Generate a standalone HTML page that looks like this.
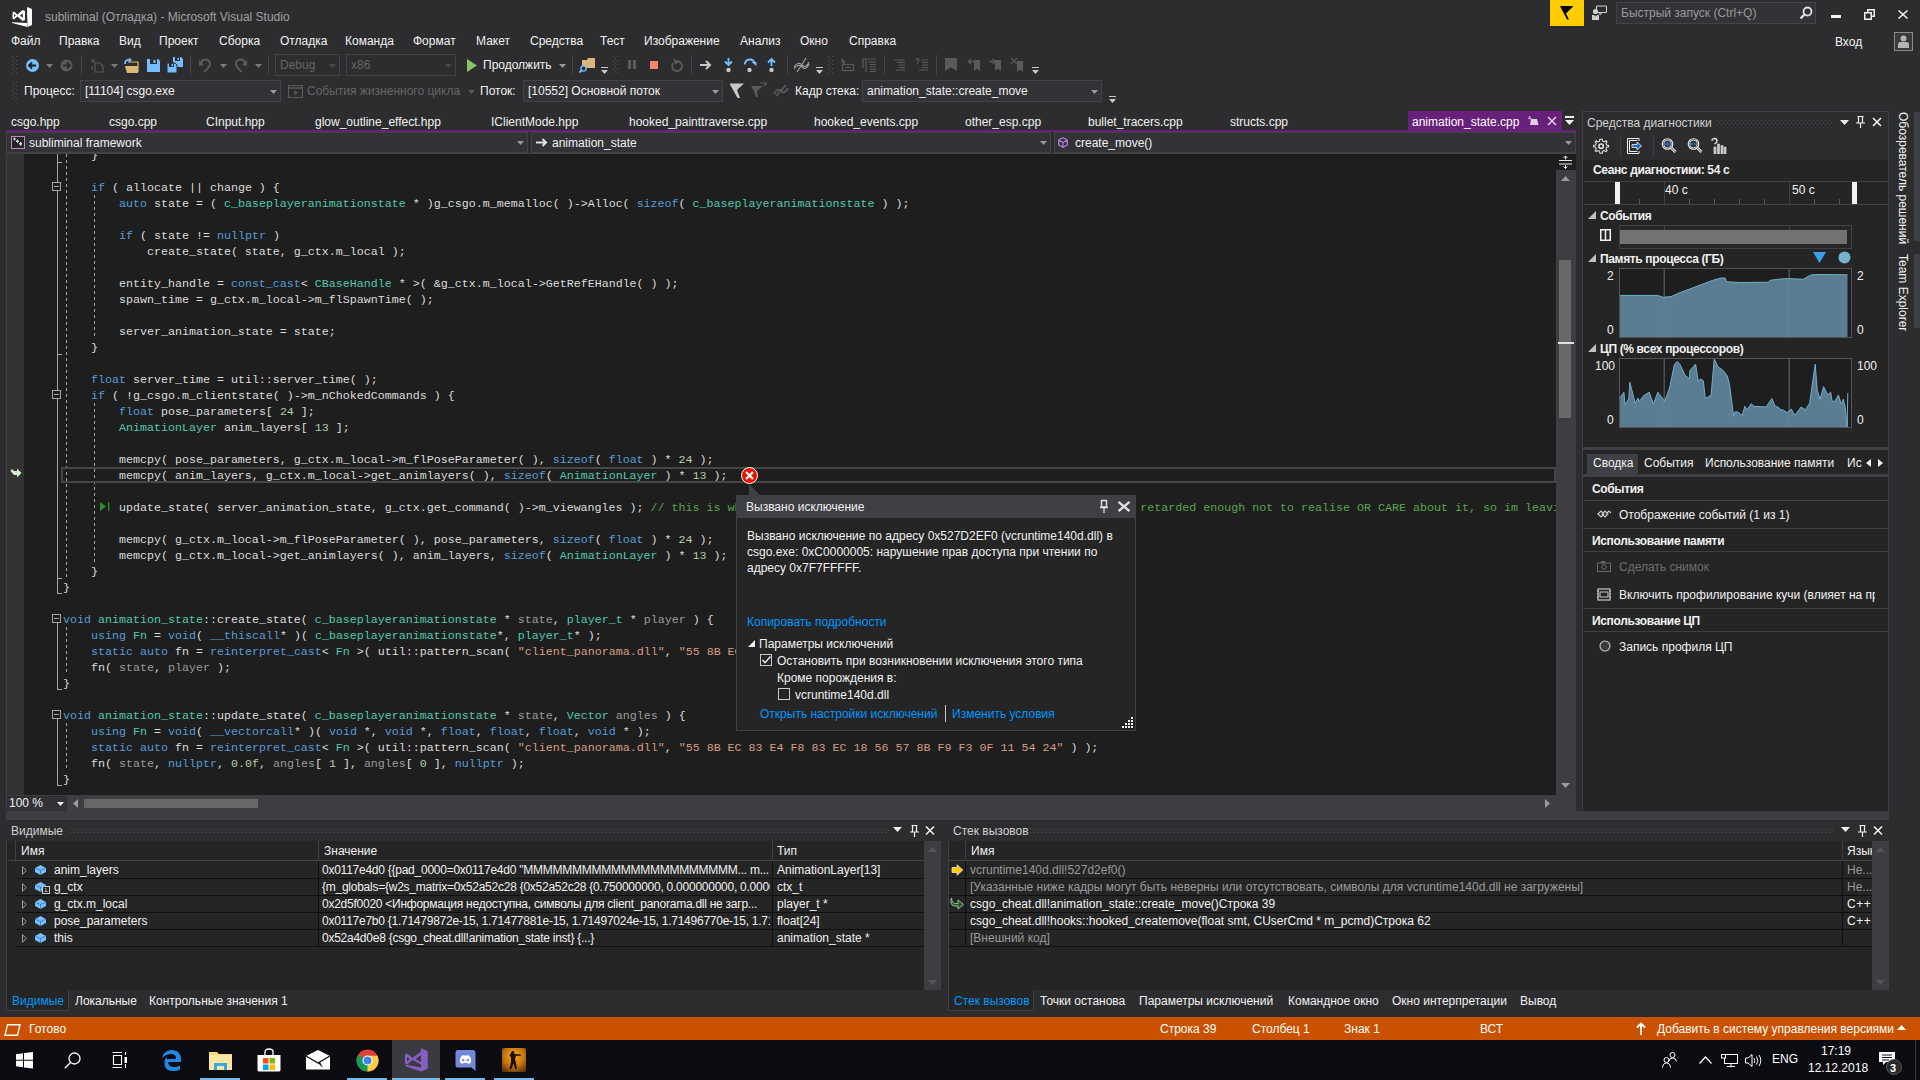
<!DOCTYPE html><html><head><meta charset="utf-8"><style>
*{margin:0;padding:0;box-sizing:border-box}
html,body{width:1920px;height:1080px;overflow:hidden;background:#2D2D30;font-family:"Liberation Sans",sans-serif}
.a{position:absolute}
.t{position:absolute;white-space:pre;line-height:16px;height:16px;font-family:"Liberation Sans",sans-serif}
.c{position:absolute;white-space:pre;line-height:16px;height:16px;font-family:"Liberation Mono",monospace;font-size:11.667px;color:#DCDCDC}
svg{position:absolute;overflow:visible}
</style></head><body><svg style="left:12px;top:6px" width="21" height="22" viewBox="0 0 21 22"><path d="M15 1 L20 3 V19 L15.5 21 Z" fill="#FFFFFF"/><path d="M0 16.2 L15 17 L15.5 21 L0 16.9 Z" fill="#FFFFFF"/><path d="M0.5 6.5 L2 5.5 L5.5 8.5 L10.5 4 L13 5 V14 L10.5 15 L5.5 10.5 L2 13.5 L0.5 12.5 Z M2 8 V11 L3.8 9.5 Z M8 9.5 L10.8 7.2 V11.8 Z" fill="#FFFFFF" fill-rule="evenodd"/></svg>
<div class="t" style="left:45px;top:9px;color:#A0A0A0;font-size:12px;">subliminal (Отладка) - Microsoft Visual Studio</div>
<div class="a" style="left:1550px;top:0px;width:34px;height:26px;background:#FFCC00;"></div>
<svg style="left:1559px;top:5px" width="16" height="16" viewBox="0 0 16 16"><path d="M1 1 H14.5 L7 8.5 L10 14.5 H8 Z" fill="#000000"/></svg>
<svg style="left:1591px;top:5px" width="17" height="16" viewBox="0 0 17 16"><rect x="5.5" y="1" width="10" height="6.5" rx="0.8" fill="none" stroke="#D0D0D0" stroke-width="1.1"/><path d="M8.5 7.5 L9 10 L11 7.5" fill="none" stroke="#D0D0D0" stroke-width="1"/><circle cx="4.5" cy="6.5" r="2.6" fill="#D0D0D0"/><path d="M1 10 H3 L4.5 11.5 L6 10 H8 V15 H1 Z" fill="#D0D0D0"/></svg>
<div class="a" style="left:1616px;top:2px;width:200px;height:22px;background:#333337;border:1px solid #434346;"></div>
<div class="t" style="left:1621px;top:5px;color:#999999;font-size:12px;">Быстрый запуск (Ctrl+Q)</div>
<svg style="left:1799px;top:6px" width="14" height="14" viewBox="0 0 14 14"><circle cx="8.5" cy="5.5" r="4" fill="none" stroke="#E0E0E0" stroke-width="1.8"/><path d="M6 8 L1.5 12.5" stroke="#E0E0E0" stroke-width="2.4"/></svg>
<div class="a" style="left:1831px;top:15px;width:10px;height:3px;background:#F1F1F1;"></div>
<svg style="left:1864px;top:9px" width="11" height="11" viewBox="0 0 11 11"><rect x="0.75" y="3.75" width="6.5" height="6.5" fill="none" stroke="#F1F1F1" stroke-width="1.5"/><path d="M3.75 3.5 V0.75 H10.25 V7.25 H7.5" fill="none" stroke="#F1F1F1" stroke-width="1.5"/></svg>
<svg style="left:1898px;top:10px" width="10" height="9" viewBox="0 0 10 9"><path d="M0.5 0.5 L9.5 8.5 M9.5 0.5 L0.5 8.5" stroke="#F1F1F1" stroke-width="1.6"/></svg>
<div class="t" style="left:1835px;top:34px;color:#F1F1F1;font-size:12px;">Вход</div>
<div class="a" style="left:1894px;top:32px;width:19px;height:19px;border:1px solid #8A8A8A;background:#3A3A3D;"></div>
<svg style="left:1896px;top:34px" width="15" height="15" viewBox="0 0 15 15"><circle cx="7.5" cy="4.5" r="3" fill="#B4B4B4"/><path d="M2 14 V10 Q2 8 4.5 8 H10.5 Q13 8 13 10 V14 Z" fill="#B4B4B4"/></svg>
<div class="t" style="left:11px;top:33px;color:#F1F1F1;font-size:12px;">Файл</div>
<div class="t" style="left:59px;top:33px;color:#F1F1F1;font-size:12px;">Правка</div>
<div class="t" style="left:119px;top:33px;color:#F1F1F1;font-size:12px;">Вид</div>
<div class="t" style="left:159px;top:33px;color:#F1F1F1;font-size:12px;">Проект</div>
<div class="t" style="left:219px;top:33px;color:#F1F1F1;font-size:12px;">Сборка</div>
<div class="t" style="left:280px;top:33px;color:#F1F1F1;font-size:12px;">Отладка</div>
<div class="t" style="left:345px;top:33px;color:#F1F1F1;font-size:12px;">Команда</div>
<div class="t" style="left:413px;top:33px;color:#F1F1F1;font-size:12px;">Формат</div>
<div class="t" style="left:476px;top:33px;color:#F1F1F1;font-size:12px;">Макет</div>
<div class="t" style="left:530px;top:33px;color:#F1F1F1;font-size:12px;">Средства</div>
<div class="t" style="left:600px;top:33px;color:#F1F1F1;font-size:12px;">Тест</div>
<div class="t" style="left:644px;top:33px;color:#F1F1F1;font-size:12px;">Изображение</div>
<div class="t" style="left:740px;top:33px;color:#F1F1F1;font-size:12px;">Анализ</div>
<div class="t" style="left:800px;top:33px;color:#F1F1F1;font-size:12px;">Окно</div>
<div class="t" style="left:849px;top:33px;color:#F1F1F1;font-size:12px;">Справка</div>
<svg style="left:12px;top:56px" width="5" height="18"><defs><pattern id="dp1" width="4" height="4" patternUnits="userSpaceOnUse"><rect x="0" y="0" width="1" height="1" fill="#505055"/><rect x="2" y="2" width="1" height="1" fill="#505055"/></pattern></defs><rect width="5" height="18" fill="url(#dp1)"/></svg>
<svg style="left:26px;top:59px" width="13" height="13" viewBox="0 0 13 13"><circle cx="6.5" cy="6.5" r="6.5" fill="#75BEFF"/><path d="M3 6.5 H10 M6 3.5 L3 6.5 L6 9.5" fill="none" stroke="#1E1E1E" stroke-width="1.8"/></svg>
<svg style="left:46px;top:64px" width="7" height="4" viewBox="0 0 7 4"><path d="M0 0 H7 L3.5 4 Z" fill="#7A7A7A"/></svg>
<svg style="left:60px;top:59px" width="13" height="13" viewBox="0 0 13 13"><circle cx="6.5" cy="6.5" r="6" fill="#5A5A5A"/><path d="M3 6.5 H10 M7 3.5 L10 6.5 L7 9.5" fill="none" stroke="#2D2D30" stroke-width="1.8"/></svg>
<div class="a" style="left:81px;top:55px;width:1px;height:20px;background:#46464A;"></div>
<svg style="left:90px;top:58px" width="14" height="15" viewBox="0 0 14 15"><path d="M3 1 L3 5 M1 3 H5 M1.5 1.5 L4.5 4.5 M4.5 1.5 L1.5 4.5" stroke="#5A5A5A" stroke-width="0.9"/><path d="M5 5 H10 L13 8 V14 H5 Z M2 8 V11 H3" fill="none" stroke="#5A5A5A" stroke-width="1.2"/></svg>
<svg style="left:111px;top:64px" width="7" height="4" viewBox="0 0 7 4"><path d="M0 0 H7 L3.5 4 Z" fill="#7A7A7A"/></svg>
<svg style="left:124px;top:57px" width="15" height="16" viewBox="0 0 15 16"><path d="M1 9 H14 V16 H3 Z" fill="#DCB67A"/><path d="M4 5 H14 V15" fill="none" stroke="#DCB67A" stroke-width="1.2"/><path d="M1 7 Q1 2 6 3" fill="none" stroke="#75BEFF" stroke-width="1.8"/><path d="M5 0.5 L8 3 L5 5.5 Z" fill="#75BEFF"/></svg>
<svg style="left:147px;top:59px" width="13" height="13" viewBox="0 0 13 13"><path d="M0 0 H11 L13 2 V13 H0 Z" fill="#75BEFF"/><rect x="3" y="0" width="7" height="5" fill="#2D2D30"/><rect x="6.5" y="1" width="2" height="3" fill="#75BEFF"/></svg>
<svg style="left:167px;top:57px" width="16" height="16" viewBox="0 0 16 16"><path d="M6 0 H14 L16 2 V10 H6 Z" fill="#75BEFF"/><rect x="8" y="0" width="5" height="4" fill="#2D2D30"/><rect x="10.5" y="0.8" width="1.5" height="2.4" fill="#75BEFF"/><path d="M0 6 H8 L10 8 V16 H0 Z" fill="#75BEFF" stroke="#2D2D30" stroke-width="1"/><rect x="2" y="6" width="5" height="4" fill="#2D2D30"/><rect x="4.5" y="6.8" width="1.5" height="2.4" fill="#75BEFF"/></svg>
<div class="a" style="left:190px;top:55px;width:1px;height:20px;background:#46464A;"></div>
<svg style="left:199px;top:58px" width="13" height="14" viewBox="0 0 13 14"><path d="M3 7 Q1 2 6 1.5 Q11 1.5 11 6 Q11 9 5 14" fill="none" stroke="#5A5A5A" stroke-width="2"/><path d="M0 2 L5 7 L0 8 Z" fill="#5A5A5A"/></svg>
<svg style="left:220px;top:64px" width="7" height="4" viewBox="0 0 7 4"><path d="M0 0 H7 L3.5 4 Z" fill="#7A7A7A"/></svg>
<svg style="left:234px;top:58px" width="13" height="14" viewBox="0 0 13 14"><path d="M10 7 Q12 2 7 1.5 Q2 1.5 2 6 Q2 9 8 14" fill="none" stroke="#5A5A5A" stroke-width="2"/><path d="M13 2 L8 7 L13 8 Z" fill="#5A5A5A"/></svg>
<svg style="left:255px;top:64px" width="7" height="4" viewBox="0 0 7 4"><path d="M0 0 H7 L3.5 4 Z" fill="#7A7A7A"/></svg>
<div class="a" style="left:268px;top:55px;width:1px;height:20px;background:#46464A;"></div>
<div class="a" style="left:275px;top:54px;width:65px;height:22px;background:#2D2D30;border:1px solid #434346;"></div>
<div class="t" style="left:280px;top:57px;color:#656565;font-size:12px;">Debug</div>
<svg style="left:329px;top:64px" width="7" height="4" viewBox="0 0 7 4"><path d="M0 0 H7 L3.5 4 Z" fill="#4A4A4A"/></svg>
<div class="a" style="left:346px;top:54px;width:110px;height:22px;background:#2D2D30;border:1px solid #434346;"></div>
<div class="t" style="left:351px;top:57px;color:#656565;font-size:12px;">x86</div>
<svg style="left:445px;top:64px" width="7" height="4" viewBox="0 0 7 4"><path d="M0 0 H7 L3.5 4 Z" fill="#4A4A4A"/></svg>
<svg style="left:467px;top:59px" width="10" height="13" viewBox="0 0 10 13"><path d="M0 0 L10 6.5 L0 13 Z" fill="#8CC265"/></svg>
<div class="t" style="left:483px;top:57px;color:#F1F1F1;font-size:12px;">Продолжить</div>
<svg style="left:559px;top:64px" width="7" height="4" viewBox="0 0 7 4"><path d="M0 0 H7 L3.5 4 Z" fill="#999999"/></svg>
<div class="a" style="left:572px;top:55px;width:1px;height:20px;background:#46464A;"></div>
<svg style="left:579px;top:57px" width="18" height="17" viewBox="0 0 18 17"><path d="M3 3 H8 L9 1 H16 V11 H3 Z" fill="#DCB67A"/><circle cx="4.5" cy="11.5" r="2.6" fill="#2D2D30" stroke="#75BEFF" stroke-width="1.4"/><path d="M2.8 13.2 L0.5 15.5" stroke="#75BEFF" stroke-width="1.8"/></svg>
<div class="a" style="left:601px;top:67px;width:7px;height:1px;background:#C8C8C8;"></div>
<svg style="left:601px;top:70px" width="7" height="4" viewBox="0 0 7 4"><path d="M0 0 H7 L3.5 4 Z" fill="#C8C8C8"/></svg>
<svg style="left:613px;top:56px" width="5" height="18"><defs><pattern id="dp2" width="4" height="4" patternUnits="userSpaceOnUse"><rect x="0" y="0" width="1" height="1" fill="#505055"/><rect x="2" y="2" width="1" height="1" fill="#505055"/></pattern></defs><rect width="5" height="18" fill="url(#dp2)"/></svg>
<div class="a" style="left:628px;top:60px;width:3px;height:9px;background:#5A5A5A;"></div>
<div class="a" style="left:633px;top:60px;width:3px;height:9px;background:#5A5A5A;"></div>
<div class="a" style="left:650px;top:61px;width:8px;height:8px;background:#F48771;"></div>
<svg style="left:670px;top:58px" width="13" height="14" viewBox="0 0 13 14"><path d="M3.5 4.5 A5 5 0 1 0 6.5 3" fill="none" stroke="#5A5A5A" stroke-width="1.8"/><path d="M4 0 V6 H9.5 Z" fill="#5A5A5A" transform="rotate(-20 5 3)"/></svg>
<div class="a" style="left:691px;top:55px;width:1px;height:20px;background:#46464A;"></div>
<svg style="left:700px;top:60px" width="12" height="10" viewBox="0 0 12 10"><path d="M0 5 H10 M6 1 L10 5 L6 9" fill="none" stroke="#C8C8C8" stroke-width="2"/></svg>
<svg style="left:724px;top:58px" width="9" height="15" viewBox="0 0 9 15"><path d="M4.5 0 V6 M1 3.5 L4.5 7 L8 3.5" fill="none" stroke="#75BEFF" stroke-width="1.8"/><circle cx="4.5" cy="12" r="2.2" fill="#C8C8C8"/></svg>
<svg style="left:743px;top:58px" width="14" height="15" viewBox="0 0 14 15"><path d="M1.5 6.5 Q2.5 1.5 7 1.5 Q10.5 1.5 11.5 5" fill="none" stroke="#75BEFF" stroke-width="1.8"/><path d="M8.5 4 H13.5 V8 Z" fill="#75BEFF"/><circle cx="6.5" cy="12" r="2.2" fill="#C8C8C8"/></svg>
<svg style="left:767px;top:58px" width="9" height="15" viewBox="0 0 9 15"><path d="M4.5 8 V1.5 M1 4.5 L4.5 1 L8 4.5" fill="none" stroke="#75BEFF" stroke-width="1.8"/><circle cx="4.5" cy="12" r="2.2" fill="#C8C8C8"/></svg>
<div class="a" style="left:787px;top:55px;width:1px;height:20px;background:#46464A;"></div>
<svg style="left:793px;top:57px" width="17" height="16" viewBox="0 0 17 16"><path d="M1 10 Q5 4 9 8 Q13 12 16 5 M1 12 Q5 6 9 10 Q13 14 16 7 M4 15 L13 1" fill="none" stroke="#A0A0A0" stroke-width="1.2"/></svg>
<div class="a" style="left:816px;top:67px;width:7px;height:1px;background:#C8C8C8;"></div>
<svg style="left:816px;top:70px" width="7" height="4" viewBox="0 0 7 4"><path d="M0 0 H7 L3.5 4 Z" fill="#C8C8C8"/></svg>
<svg style="left:828px;top:56px" width="5" height="18"><defs><pattern id="dp3" width="4" height="4" patternUnits="userSpaceOnUse"><rect x="0" y="0" width="1" height="1" fill="#505055"/><rect x="2" y="2" width="1" height="1" fill="#505055"/></pattern></defs><rect width="5" height="18" fill="url(#dp3)"/></svg>
<svg style="left:841px;top:58px" width="14" height="14" viewBox="0 0 14 14"><path d="M0 0 L5 4 L3 4.5 L4 7 L1 5 Z" fill="#5A5A5A"/><rect x="1.5" y="6.5" width="11" height="6" fill="none" stroke="#5A5A5A" stroke-width="1.2"/><path d="M4 9.5 H10" stroke="#5A5A5A"/></svg>
<svg style="left:862px;top:58px" width="14" height="14" viewBox="0 0 14 14"><path d="M3 1 H1 V9 H2 M4 0 V14" fill="none" stroke="#5A5A5A" stroke-width="1.2"/><path d="M6 1 H14 M6 4 H14 M8 6.5 H14 M8 9 H14 M8 11.5 H14 M8 13.5 H14" stroke="#5A5A5A" stroke-width="1.2"/></svg>
<div class="a" style="left:884px;top:55px;width:1px;height:20px;background:#46464A;"></div>
<svg style="left:894px;top:59px" width="11" height="12" viewBox="0 0 11 12"><path d="M0 1 H2 M2 1 H11 M3 3.5 H11 M5 6 H11 M5 8.5 H11 M2 11 H11" stroke="#5A5A5A" stroke-width="1.2"/></svg>
<svg style="left:915px;top:58px" width="13" height="13" viewBox="0 0 13 13"><path d="M0.5 3 Q1 0.5 3 0.5 Q5 1 3 4 L2 6" fill="none" stroke="#5A5A5A" stroke-width="1.2"/><path d="M6 2 H13 M7 4.5 H13 M7 7 H13 M7 9.5 H13 M4 12 H13" stroke="#5A5A5A" stroke-width="1.2"/></svg>
<div class="a" style="left:936px;top:55px;width:1px;height:20px;background:#46464A;"></div>
<svg style="left:945px;top:58px" width="12" height="13" viewBox="0 0 12 13"><path d="M0 0 H12 V13 L6 9.5 L0 13 Z" fill="#5A5A5A"/></svg>
<svg style="left:967px;top:58px" width="14" height="13" viewBox="0 0 14 13"><path d="M7 2 H13 V13 L10 10.5 L7 13 Z" fill="#5A5A5A"/><path d="M8 3.5 H1.5 M4 1 L1.5 3.5 L4 6" fill="none" stroke="#5A5A5A" stroke-width="1.4"/></svg>
<svg style="left:989px;top:58px" width="13" height="13" viewBox="0 0 13 13"><path d="M6 2 H12 V13 L9 10.5 L6 13 Z" fill="#5A5A5A"/><path d="M0 3.5 H6 M3.5 1 L6 3.5 L3.5 6" fill="none" stroke="#5A5A5A" stroke-width="1.4"/></svg>
<svg style="left:1011px;top:58px" width="13" height="14" viewBox="0 0 13 14"><path d="M6 3 H12 V14 L9 11.5 L6 14 Z" fill="#5A5A5A"/><path d="M0 0 L6 6 M6 0 L0 6" stroke="#5A5A5A" stroke-width="1.2"/></svg>
<div class="a" style="left:1032px;top:67px;width:7px;height:1px;background:#C8C8C8;"></div>
<svg style="left:1032px;top:70px" width="7" height="4" viewBox="0 0 7 4"><path d="M0 0 H7 L3.5 4 Z" fill="#C8C8C8"/></svg>
<svg style="left:12px;top:82px" width="5" height="18"><defs><pattern id="dp4" width="4" height="4" patternUnits="userSpaceOnUse"><rect x="0" y="0" width="1" height="1" fill="#505055"/><rect x="2" y="2" width="1" height="1" fill="#505055"/></pattern></defs><rect width="5" height="18" fill="url(#dp4)"/></svg>
<div class="t" style="left:24px;top:83px;color:#F1F1F1;font-size:12px;">Процесс:</div>
<div class="a" style="left:80px;top:80px;width:201px;height:22px;background:#333337;border:1px solid #434346;"></div>
<div class="t" style="left:85px;top:83px;color:#F1F1F1;font-size:12px;">[11104] csgo.exe</div>
<svg style="left:270px;top:90px" width="7" height="4" viewBox="0 0 7 4"><path d="M0 0 H7 L3.5 4 Z" fill="#999999"/></svg>
<svg style="left:288px;top:85px" width="15" height="13" viewBox="0 0 15 13"><rect x="0.5" y="0.5" width="14" height="12" fill="none" stroke="#5A5A5A"/><path d="M0.5 3 H14.5" stroke="#5A5A5A" stroke-width="1.5"/><path d="M8 4.5 L5 8.5 H7.5 L6 11.5 L10 7 H7.5 Z" fill="#5A5A5A"/></svg>
<div class="t" style="left:307px;top:83px;color:#656565;font-size:12px;">События жизненного цикла</div>
<svg style="left:468px;top:90px" width="7" height="4" viewBox="0 0 7 4"><path d="M0 0 H7 L3.5 4 Z" fill="#5A5A5A"/></svg>
<div class="t" style="left:480px;top:83px;color:#F1F1F1;font-size:12px;">Поток:</div>
<div class="a" style="left:523px;top:80px;width:200px;height:22px;background:#333337;border:1px solid #434346;"></div>
<div class="t" style="left:528px;top:83px;color:#F1F1F1;font-size:12px;">[10552] Основной поток</div>
<svg style="left:712px;top:90px" width="7" height="4" viewBox="0 0 7 4"><path d="M0 0 H7 L3.5 4 Z" fill="#999999"/></svg>
<svg style="left:729px;top:83px" width="15" height="15" viewBox="0 0 15 15"><path d="M0.5 0.5 H15 L8 7 L11 15 H8.5 Z" fill="#C8C8C8"/></svg>
<svg style="left:751px;top:83px" width="16" height="14" viewBox="0 0 16 14"><path d="M0 3 H12 L6 8 L7 14 L5 14 L3 8 Z" fill="#5A5A5A"/><path d="M9 0 H16 M13 3 L16 0" stroke="#5A5A5A" stroke-width="1.2"/></svg>
<svg style="left:773px;top:84px" width="16" height="13" viewBox="0 0 16 13"><path d="M1 10 Q5 3 8 7 Q11 11 15 4 M3 12 L13 1" fill="none" stroke="#5A5A5A" stroke-width="1.8"/></svg>
<div class="t" style="left:795px;top:83px;color:#F1F1F1;font-size:12px;">Кадр стека:</div>
<div class="a" style="left:862px;top:80px;width:240px;height:22px;background:#333337;border:1px solid #434346;"></div>
<div class="t" style="left:867px;top:83px;color:#F1F1F1;font-size:12px;">animation_state::create_move</div>
<svg style="left:1091px;top:90px" width="7" height="4" viewBox="0 0 7 4"><path d="M0 0 H7 L3.5 4 Z" fill="#999999"/></svg>
<div class="a" style="left:1109px;top:96px;width:7px;height:1px;background:#C8C8C8;"></div>
<svg style="left:1109px;top:99px" width="7" height="4" viewBox="0 0 7 4"><path d="M0 0 H7 L3.5 4 Z" fill="#C8C8C8"/></svg>
<div class="t" style="left:11px;top:114px;color:#F1F1F1;font-size:12px;">csgo.hpp</div>
<div class="t" style="left:109px;top:114px;color:#F1F1F1;font-size:12px;">csgo.cpp</div>
<div class="t" style="left:206px;top:114px;color:#F1F1F1;font-size:12px;">CInput.hpp</div>
<div class="t" style="left:315px;top:114px;color:#F1F1F1;font-size:12px;">glow_outline_effect.hpp</div>
<div class="t" style="left:491px;top:114px;color:#F1F1F1;font-size:12px;">IClientMode.hpp</div>
<div class="t" style="left:629px;top:114px;color:#F1F1F1;font-size:12px;">hooked_painttraverse.cpp</div>
<div class="t" style="left:814px;top:114px;color:#F1F1F1;font-size:12px;">hooked_events.cpp</div>
<div class="t" style="left:965px;top:114px;color:#F1F1F1;font-size:12px;">other_esp.cpp</div>
<div class="t" style="left:1088px;top:114px;color:#F1F1F1;font-size:12px;">bullet_tracers.cpp</div>
<div class="t" style="left:1230px;top:114px;color:#F1F1F1;font-size:12px;">structs.cpp</div>
<div class="a" style="left:1408px;top:111px;width:154px;height:19px;background:#68217A;"></div>
<div class="t" style="left:1412px;top:114px;color:#FFFFFF;font-size:12px;">animation_state.cpp</div>
<svg style="left:1528px;top:116px" width="11" height="9" viewBox="0 0 11 9"><path d="M1 0 L3 2.5 M0 2 L3 3" stroke="#E0D0E8" stroke-width="1"/><path d="M3 3 H9 L10.5 9 H2 Z" fill="#E0D0E8"/></svg>
<svg style="left:1547px;top:116px" width="10" height="10" viewBox="0 0 10 10"><path d="M1 1 L9 9 M9 1 L1 9" stroke="#E0D0E8" stroke-width="1.5"/></svg>
<div class="a" style="left:1565px;top:116px;width:9px;height:2px;background:#F1F1F1;"></div>
<svg style="left:1565px;top:120px" width="9" height="5" viewBox="0 0 9 5"><path d="M0 0 H9 L4.5 5 Z" fill="#F1F1F1"/></svg>
<div class="a" style="left:6px;top:130px;width:1570px;height:2px;background:#68217A;"></div>
<div class="a" style="left:6px;top:132px;width:1570px;height:22px;background:#2D2D30;"></div>
<div class="a" style="left:6px;top:132px;width:522px;height:21px;background:#333337;border:1px solid #434346;"></div>
<svg style="left:517px;top:141px" width="7" height="4" viewBox="0 0 7 4"><path d="M0 0 H7 L3.5 4 Z" fill="#999999"/></svg>
<div class="a" style="left:531px;top:132px;width:520px;height:21px;background:#333337;border:1px solid #434346;"></div>
<svg style="left:1040px;top:141px" width="7" height="4" viewBox="0 0 7 4"><path d="M0 0 H7 L3.5 4 Z" fill="#999999"/></svg>
<div class="a" style="left:1054px;top:132px;width:522px;height:21px;background:#333337;border:1px solid #434346;"></div>
<svg style="left:1565px;top:141px" width="7" height="4" viewBox="0 0 7 4"><path d="M0 0 H7 L3.5 4 Z" fill="#999999"/></svg>
<svg style="left:11px;top:136px" width="15" height="13" viewBox="0 0 15 13"><rect x="0.5" y="0.5" width="13" height="12" fill="#252526" stroke="#C586C0"/><path d="M2 2.5 h3 v1 h-3z M3 1.5 h1 v3 h-1z M5 4.5 h3 v1.5 h-3z M6 3.5 h1 v3.5 h-1z M8 7 h3 v1.5 h-3z M9 6 h1.5 v3.5 h-1.5z" fill="#D8D8D8"/></svg>
<div class="t" style="left:29px;top:135px;color:#F1F1F1;font-size:12px;">subliminal framework</div>
<svg style="left:536px;top:138px" width="12" height="9" viewBox="0 0 12 9"><path d="M0 4.5 H10 M6.5 1 L10 4.5 L6.5 8" fill="none" stroke="#E0E0E0" stroke-width="2"/></svg>
<div class="t" style="left:552px;top:135px;color:#F1F1F1;font-size:12px;">animation_state</div>
<svg style="left:1058px;top:137px" width="10" height="11" viewBox="0 0 10 11"><path d="M5 0.7 L9.3 3 V8 L5 10.3 L0.7 8 V3 Z M0.7 3 L5 5.5 L9.3 3 M5 5.5 V10.3" fill="none" stroke="#B180D7" stroke-width="1.2"/></svg>
<div class="t" style="left:1075px;top:135px;color:#F1F1F1;font-size:12px;">create_move()</div>
<div class="a" style="left:6px;top:153px;width:1570px;height:1px;background:#3F3F46;"></div>
<div class="a" style="left:6px;top:154px;width:1px;height:641px;background:#3F3F46;"></div>
<div class="a" style="left:7px;top:154px;width:17px;height:641px;background:#333333;"></div>
<div class="a" style="left:24px;top:154px;width:1532px;height:641px;background:#1E1E1E;"></div>
<div class="a" style="left:1556px;top:154px;width:20px;height:641px;background:#3E3E42;"></div>
<div class="a" style="left:1556px;top:154px;width:20px;height:16px;background:#1E1E1E;"></div>
<svg style="left:1559px;top:155px" width="13" height="14" viewBox="0 0 13 14"><path d="M0 5.5 H13 M0 9 H13 M6.5 1 V4.5 M6.5 10 V13.5 M4.5 3 L6.5 1 L8.5 3 M4.5 11.5 L6.5 13.5 L8.5 11.5" fill="none" stroke="#E8E8E8" stroke-width="1"/></svg>
<svg style="left:1561px;top:176px" width="9" height="5" viewBox="0 0 9 5"><path d="M0 5 L4.5 0 L9 5 Z" fill="#999999"/></svg>
<svg style="left:1561px;top:783px" width="9" height="5" viewBox="0 0 9 5"><path d="M0 0 L4.5 5 L9 0 Z" fill="#999999"/></svg>
<div class="a" style="left:1559px;top:260px;width:12px;height:158px;background:#686868;"></div>
<div class="a" style="left:1558px;top:342px;width:16px;height:2px;background:#E0E0E0;"></div>
<div class="a" style="left:1576px;top:132px;width:7px;height:680px;background:#2D2D30;"></div>
<div class="a" style="left:57px;top:154px;width:1px;height:439px;background:#A5A5A5;"></div>
<div class="a" style="left:57px;top:162px;width:5px;height:1px;background:#A5A5A5;"></div>
<div class="a" style="left:52px;top:182px;width:9px;height:9px;background:#1E1E1E;border:1px solid #A5A5A5;"></div>
<div class="a" style="left:54px;top:186px;width:5px;height:1px;background:#A5A5A5;"></div>
<div class="a" style="left:52px;top:390px;width:9px;height:9px;background:#1E1E1E;border:1px solid #A5A5A5;"></div>
<div class="a" style="left:54px;top:394px;width:5px;height:1px;background:#A5A5A5;"></div>
<div class="a" style="left:57px;top:354px;width:5px;height:1px;background:#A5A5A5;"></div>
<div class="a" style="left:57px;top:578px;width:5px;height:1px;background:#A5A5A5;"></div>
<div class="a" style="left:57px;top:593px;width:5px;height:1px;background:#A5A5A5;"></div>
<div class="a" style="left:52px;top:614px;width:9px;height:9px;background:#1E1E1E;border:1px solid #A5A5A5;"></div>
<div class="a" style="left:54px;top:618px;width:5px;height:1px;background:#A5A5A5;"></div>
<div class="a" style="left:57px;top:623px;width:1px;height:66px;background:#A5A5A5;"></div>
<div class="a" style="left:57px;top:689px;width:5px;height:1px;background:#A5A5A5;"></div>
<div class="a" style="left:52px;top:710px;width:9px;height:9px;background:#1E1E1E;border:1px solid #A5A5A5;"></div>
<div class="a" style="left:54px;top:714px;width:5px;height:1px;background:#A5A5A5;"></div>
<div class="a" style="left:57px;top:719px;width:1px;height:66px;background:#A5A5A5;"></div>
<div class="a" style="left:57px;top:785px;width:5px;height:1px;background:#A5A5A5;"></div>
<div class="a" style="left:66px;top:154px;width:1px;height:425px;background:repeating-linear-gradient(to bottom,#A5A5A5 0 3px,transparent 3px 6px);"></div>
<div class="a" style="left:94px;top:195px;width:1px;height:144px;background:repeating-linear-gradient(to bottom,#A5A5A5 0 3px,transparent 3px 6px);"></div>
<div class="a" style="left:94px;top:403px;width:1px;height:160px;background:repeating-linear-gradient(to bottom,#A5A5A5 0 3px,transparent 3px 6px);"></div>
<div class="a" style="left:66px;top:627px;width:1px;height:48px;background:repeating-linear-gradient(to bottom,#A5A5A5 0 3px,transparent 3px 6px);"></div>
<div class="a" style="left:66px;top:723px;width:1px;height:48px;background:repeating-linear-gradient(to bottom,#A5A5A5 0 3px,transparent 3px 6px);"></div>
<div class="a" style="left:61px;top:467px;width:1495px;height:16px;border:2px solid #464646;"></div>
<div class="a" style="left:24px;top:154px;width:1532px;height:641px;overflow:hidden"><div class="a" style="left:-24px;top:-154px;width:1600px;height:900px"><div class="c" style="left:63px;top:148px">    }</div><div class="c" style="left:63px;top:180px">    <span style="color:#569CD6">if</span> ( allocate || change ) {</div><div class="c" style="left:63px;top:196px">        <span style="color:#569CD6">auto</span> state = ( <span style="color:#4EC9B0">c_baseplayeranimationstate</span> * )g_csgo.m_memalloc( )-&gt;Alloc( <span style="color:#569CD6">sizeof</span>( <span style="color:#4EC9B0">c_baseplayeranimationstate</span> ) );</div><div class="c" style="left:63px;top:228px">        <span style="color:#569CD6">if</span> ( state != <span style="color:#569CD6">nullptr</span> )</div><div class="c" style="left:63px;top:244px">            create_state( state, g_ctx.m_local );</div><div class="c" style="left:63px;top:276px">        entity_handle = <span style="color:#569CD6">const_cast</span>&lt; <span style="color:#4EC9B0">CBaseHandle</span> * &gt;( &amp;g_ctx.m_local-&gt;GetRefEHandle( ) );</div><div class="c" style="left:63px;top:292px">        spawn_time = g_ctx.m_local-&gt;m_flSpawnTime( );</div><div class="c" style="left:63px;top:324px">        server_animation_state = state;</div><div class="c" style="left:63px;top:340px">    }</div><div class="c" style="left:63px;top:372px">    <span style="color:#569CD6">float</span> server_time = util::server_time( );</div><div class="c" style="left:63px;top:388px">    <span style="color:#569CD6">if</span> ( !g_csgo.m_clientstate( )-&gt;m_nChokedCommands ) {</div><div class="c" style="left:63px;top:404px">        <span style="color:#569CD6">float</span> pose_parameters[ <span style="color:#B5CEA8">24</span> ];</div><div class="c" style="left:63px;top:420px">        <span style="color:#4EC9B0">AnimationLayer</span> anim_layers[ <span style="color:#B5CEA8">13</span> ];</div><div class="c" style="left:63px;top:452px">        memcpy( pose_parameters, g_ctx.m_local-&gt;m_flPoseParameter( ), <span style="color:#569CD6">sizeof</span>( <span style="color:#569CD6">float</span> ) * <span style="color:#B5CEA8">24</span> );</div><div class="c" style="left:63px;top:468px">        memcpy( anim_layers, g_ctx.m_local-&gt;get_animlayers( ), <span style="color:#569CD6">sizeof</span>( <span style="color:#4EC9B0">AnimationLayer</span> ) * <span style="color:#B5CEA8">13</span> );</div><div class="c" style="left:63px;top:500px">        update_state( server_animation_state, g_ctx.get_command( )-&gt;m_viewangles ); <span style="color:#57A64A">// this is why we cant have nice things, if ur gonna paste this so ur retarded enough not to realise OR CARE about it, so im leaving it</span></div><div class="c" style="left:63px;top:532px">        memcpy( g_ctx.m_local-&gt;m_flPoseParameter( ), pose_parameters, <span style="color:#569CD6">sizeof</span>( <span style="color:#569CD6">float</span> ) * <span style="color:#B5CEA8">24</span> );</div><div class="c" style="left:63px;top:548px">        memcpy( g_ctx.m_local-&gt;get_animlayers( ), anim_layers, <span style="color:#569CD6">sizeof</span>( <span style="color:#4EC9B0">AnimationLayer</span> ) * <span style="color:#B5CEA8">13</span> );</div><div class="c" style="left:63px;top:564px">    }</div><div class="c" style="left:63px;top:580px">}</div><div class="c" style="left:63px;top:612px"><span style="color:#569CD6">void</span> <span style="color:#4EC9B0">animation_state</span>::create_state( <span style="color:#4EC9B0">c_baseplayeranimationstate</span> * <span style="color:#9A9A9A">state</span>, <span style="color:#4EC9B0">player_t</span> * <span style="color:#9A9A9A">player</span> ) {</div><div class="c" style="left:63px;top:628px">    <span style="color:#569CD6">using</span> <span style="color:#4EC9B0">Fn</span> = <span style="color:#569CD6">void</span>( <span style="color:#569CD6">__thiscall</span>* )( <span style="color:#4EC9B0">c_baseplayeranimationstate</span>*, <span style="color:#4EC9B0">player_t</span>* );</div><div class="c" style="left:63px;top:644px">    <span style="color:#569CD6">static</span> <span style="color:#569CD6">auto</span> fn = <span style="color:#569CD6">reinterpret_cast</span>&lt; <span style="color:#4EC9B0">Fn</span> &gt;( util::pattern_scan( <span style="color:#D69D85">&quot;client_panorama.dll&quot;</span>, <span style="color:#D69D85">&quot;55 8B EC 56 8B F1 B9 ?? ?? ?? ?? C7 46&quot;</span> ) );</div><div class="c" style="left:63px;top:660px">    fn( <span style="color:#9A9A9A">state</span>, <span style="color:#9A9A9A">player</span> );</div><div class="c" style="left:63px;top:676px">}</div><div class="c" style="left:63px;top:708px"><span style="color:#569CD6">void</span> <span style="color:#4EC9B0">animation_state</span>::update_state( <span style="color:#4EC9B0">c_baseplayeranimationstate</span> * <span style="color:#9A9A9A">state</span>, <span style="color:#4EC9B0">Vector</span> <span style="color:#9A9A9A">angles</span> ) {</div><div class="c" style="left:63px;top:724px">    <span style="color:#569CD6">using</span> <span style="color:#4EC9B0">Fn</span> = <span style="color:#569CD6">void</span>( <span style="color:#569CD6">__vectorcall</span>* )( <span style="color:#569CD6">void</span> *, <span style="color:#569CD6">void</span> *, <span style="color:#569CD6">float</span>, <span style="color:#569CD6">float</span>, <span style="color:#569CD6">float</span>, <span style="color:#569CD6">void</span> * );</div><div class="c" style="left:63px;top:740px">    <span style="color:#569CD6">static</span> <span style="color:#569CD6">auto</span> fn = <span style="color:#569CD6">reinterpret_cast</span>&lt; <span style="color:#4EC9B0">Fn</span> &gt;( util::pattern_scan( <span style="color:#D69D85">&quot;client_panorama.dll&quot;</span>, <span style="color:#D69D85">&quot;55 8B EC 83 E4 F8 83 EC 18 56 57 8B F9 F3 0F 11 54 24&quot;</span> ) );</div><div class="c" style="left:63px;top:756px">    fn( <span style="color:#9A9A9A">state</span>, <span style="color:#569CD6">nullptr</span>, <span style="color:#B5CEA8">0.0f</span>, <span style="color:#9A9A9A">angles</span>[ <span style="color:#B5CEA8">1</span> ], <span style="color:#9A9A9A">angles</span>[ <span style="color:#B5CEA8">0</span> ], <span style="color:#569CD6">nullptr</span> );</div><div class="c" style="left:63px;top:772px">}</div></div></div>
<svg style="left:10px;top:468px" width="12" height="11" viewBox="0 0 12 11"><path d="M0.5 3 L2 1 L4 3 H7 V0.5 L11.5 5 L7 9.5 V7 H4 Z" fill="#D4F0D4"/></svg>
<svg style="left:100px;top:502px" width="10" height="9" viewBox="0 0 10 9"><path d="M0 0 L6 4.5 L0 9 Z" fill="#2E8B2E"/><rect x="8" y="0" width="1.3" height="9" fill="#2E8B2E"/></svg>
<svg style="left:741px;top:467px" width="17" height="17" viewBox="0 0 17 17"><circle cx="8.5" cy="8.5" r="8" fill="#E51400" stroke="#FFFFFF" stroke-width="1"/><path d="M5 5 L12 12 M12 5 L5 12" stroke="#FFFFFF" stroke-width="2.2"/></svg>
<div class="a" style="left:6px;top:795px;width:1570px;height:16px;background:#3E3E42;"></div>
<div class="a" style="left:7px;top:796px;width:60px;height:15px;background:#333337;border:1px solid #2D2D30;"></div>
<div class="t" style="left:9px;top:795px;color:#F1F1F1;font-size:12px;">100 %</div>
<svg style="left:57px;top:802px" width="7" height="4" viewBox="0 0 7 4"><path d="M0 0 H7 L3.5 4 Z" fill="#F1F1F1"/></svg>
<svg style="left:73px;top:799px" width="5" height="9" viewBox="0 0 5 9"><path d="M5 0 L0 4.5 L5 9 Z" fill="#999999"/></svg>
<div class="a" style="left:84px;top:799px;width:174px;height:9px;background:#686868;"></div>
<svg style="left:1545px;top:799px" width="5" height="9" viewBox="0 0 5 9"><path d="M0 0 L5 4.5 L0 9 Z" fill="#999999"/></svg>
<svg style="left:749px;top:484px" width="13" height="12" viewBox="0 0 13 12"><path d="M0 0 L0 12 L12 12 Z" fill="#3F3F46"/></svg>
<div class="a" style="left:736px;top:495px;width:400px;height:236px;background:#252526;border:1px solid #3F3F46;"></div>
<div class="a" style="left:736px;top:495px;width:400px;height:23px;background:#3F3F46;"></div>
<div class="t" style="left:746px;top:499px;color:#F1F1F1;font-size:12px;">Вызвано исключение</div>
<svg style="left:1100px;top:500px" width="8" height="13" viewBox="0 0 8 13"><path d="M1.5 0.5 H6.5 V7 H1.5 Z" fill="none" stroke="#E0E0E0" stroke-width="1.4"/><path d="M0 7.5 H8 M4 7.5 V13" stroke="#E0E0E0" stroke-width="1.3"/></svg>
<svg style="left:1117px;top:501px" width="14" height="11" viewBox="0 0 14 11"><path d="M1.5 0.8 L12.5 10.2 M12.5 0.8 L1.5 10.2" stroke="#E0E0E0" stroke-width="2.4"/></svg>
<div class="t" style="left:747px;top:528px;color:#F1F1F1;font-size:12px;">Вызвано исключение по адресу 0x527D2EF0 (vcruntime140d.dll) в</div>
<div class="t" style="left:747px;top:544px;color:#F1F1F1;font-size:12px;">csgo.exe: 0xC0000005: нарушение прав доступа при чтении по</div>
<div class="t" style="left:747px;top:560px;color:#F1F1F1;font-size:12px;">адресу 0x7F7FFFFF.</div>
<div class="t" style="left:747px;top:614px;color:#0097FB;font-size:12px;">Копировать подробности</div>
<svg style="left:748px;top:640px" width="7" height="7" viewBox="0 0 7 7"><path d="M7 0 V7 H0 Z" fill="#F1F1F1"/></svg>
<div class="t" style="left:759px;top:636px;color:#F1F1F1;font-size:12px;">Параметры исключений</div>
<div class="a" style="left:760px;top:654px;width:12px;height:12px;background:#252526;border:1px solid #C8C8C8;"></div>
<svg style="left:762px;top:656px" width="9" height="8" viewBox="0 0 9 8"><path d="M0.5 4 L3 6.8 L8.5 0.5" fill="none" stroke="#F1F1F1" stroke-width="1.4"/></svg>
<div class="t" style="left:777px;top:653px;color:#F1F1F1;font-size:12px;">Остановить при возникновении исключения этого типа</div>
<div class="t" style="left:777px;top:670px;color:#F1F1F1;font-size:12px;">Кроме порождения в:</div>
<div class="a" style="left:778px;top:688px;width:12px;height:12px;background:#252526;border:1px solid #C8C8C8;"></div>
<div class="t" style="left:795px;top:687px;color:#F1F1F1;font-size:12px;">vcruntime140d.dll</div>
<div class="t" style="left:760px;top:706px;color:#0097FB;font-size:12px;">Открыть настройки исключений</div>
<div class="a" style="left:945px;top:705px;width:1px;height:17px;background:#C8C8C8;"></div>
<div class="t" style="left:952px;top:706px;color:#0097FB;font-size:12px;">Изменить условия</div>
<svg style="left:1122px;top:717px" width="12" height="12" viewBox="0 0 12 12"><g fill="#F1F1F1"><rect x="9" y="0" width="2" height="2"/><rect x="6" y="3" width="2" height="2"/><rect x="9" y="3" width="2" height="2"/><rect x="3" y="6" width="2" height="2"/><rect x="6" y="6" width="2" height="2"/><rect x="9" y="6" width="2" height="2"/><rect x="0" y="9" width="2" height="2"/><rect x="3" y="9" width="2" height="2"/><rect x="6" y="9" width="2" height="2"/><rect x="9" y="9" width="2" height="2"/></g></svg>
<div class="a" style="left:1582px;top:111px;width:307px;height:702px;background:#2D2D30;border:1px solid #3F3F46;"></div>
<div class="t" style="left:1587px;top:115px;color:#D0D0D0;font-size:12px;">Средства диагностики</div>
<svg style="left:1717px;top:120px" width="116" height="5"><defs><pattern id="dp5" width="4" height="4" patternUnits="userSpaceOnUse"><rect x="0" y="0" width="1" height="1" fill="#505055"/><rect x="2" y="2" width="1" height="1" fill="#505055"/></pattern></defs><rect width="116" height="5" fill="url(#dp5)"/></svg>
<svg style="left:1840px;top:120px" width="9" height="5" viewBox="0 0 9 5"><path d="M0 0 H9 L4.5 5 Z" fill="#F1F1F1"/></svg>
<svg style="left:1856px;top:116px" width="9" height="12" viewBox="0 0 9 12"><path d="M1.5 0.5 H7.5 M2.5 0.5 V7 H6.5 V0.5 M0 7 H9 M4.5 7 V12" fill="none" stroke="#F1F1F1" stroke-width="1.2"/></svg>
<svg style="left:1872px;top:117px" width="10" height="10" viewBox="0 0 10 10"><path d="M1 1 L9 9 M9 1 L1 9" stroke="#F1F1F1" stroke-width="1.6"/></svg>
<svg style="left:1593px;top:138px" width="16" height="16" viewBox="0 0 16 16"><path d="M8 1.2 L9.3 1.2 L9.7 3.2 L11.3 3.9 L13 2.8 L14 3.8 L12.9 5.5 L13.6 7.1 L15.6 7.5 V8.9 L13.6 9.3 L12.9 10.9 L14 12.6 L13 13.6 L11.3 12.5 L9.7 13.2 L9.3 15.2 H6.9 L6.5 13.2 L4.9 12.5 L3.2 13.6 L2.2 12.6 L3.3 10.9 L2.6 9.3 L0.6 8.9 V7.5 L2.6 7.1 L3.3 5.5 L2.2 3.8 L3.2 2.8 L4.9 3.9 L6.5 3.2 L6.9 1.2 Z" fill="none" stroke="#E0E0E0" stroke-width="1.1"/><circle cx="8.1" cy="8.2" r="2.2" fill="none" stroke="#E0E0E0" stroke-width="1.6"/></svg>
<div class="a" style="left:1620px;top:135px;width:1px;height:22px;background:#3F3F46;"></div>
<svg style="left:1627px;top:138px" width="17" height="16" viewBox="0 0 17 16"><path d="M12 3 V0.5 H0.5 V15.5 H12 V13" fill="none" stroke="#F1F1F1" stroke-width="1"/><path d="M10 3 V2.5 H2.5 V13.5 H10 V13" fill="none" stroke="#F1F1F1" stroke-width="1"/><path d="M5 6.5 H10 V4 L14.5 8 L10 12 V9.5 H5 Z" fill="#1E6FC8" stroke="#F1F1F1" stroke-width="0.8"/></svg>
<div class="a" style="left:1653px;top:135px;width:1px;height:22px;background:#3F3F46;"></div>
<svg style="left:1661px;top:138px" width="16" height="16" viewBox="0 0 16 16"><circle cx="6.5" cy="6" r="5.3" fill="none" stroke="#F1F1F1" stroke-width="1.1"/><circle cx="6.5" cy="6" r="3.8" fill="none" stroke="#F1F1F1" stroke-width="0.8"/><path d="M10 9.5 L14.5 14" stroke="#F1F1F1" stroke-width="2.6"/><path d="M10 9.5 L14.5 14" stroke="#2D2D30" stroke-width="0.9"/><path d="M4 6 H9 M6.5 3.5 V8.5" stroke="#1E6FC8" stroke-width="1.6"/></svg>
<svg style="left:1687px;top:138px" width="16" height="16" viewBox="0 0 16 16"><circle cx="6.5" cy="6" r="5.3" fill="none" stroke="#F1F1F1" stroke-width="1.1"/><circle cx="6.5" cy="6" r="3.8" fill="none" stroke="#F1F1F1" stroke-width="0.8"/><path d="M10 9.5 L14.5 14" stroke="#F1F1F1" stroke-width="2.6"/><path d="M10 9.5 L14.5 14" stroke="#2D2D30" stroke-width="0.9"/><path d="M4 6 H9" stroke="#1E6FC8" stroke-width="1.6"/></svg>
<svg style="left:1711px;top:138px" width="16" height="16" viewBox="0 0 16 16"><path d="M3 16 V9 H5 V16 M6.5 16 V6 H8.5 V16 M10 16 V7.5 H12 V16 M13 16 V9 H15 V16" fill="#C8C8C8" stroke="#C8C8C8" stroke-width="0.8"/><path d="M1 3 Q1 0.5 3.5 0.5 Q6 0.5 6 3 Q6 5 3.5 6" fill="none" stroke="#E0E0E0" stroke-width="1.4"/></svg>
<div class="a" style="left:1583px;top:160px;width:305px;height:21px;background:#252526;"></div>
<div class="t" style="left:1593px;top:162px;color:#F1F1F1;font-size:12px;font-weight:bold;letter-spacing:-0.35px;">Сеанс диагностики: 54 с</div>
<div class="a" style="left:1583px;top:181px;width:305px;height:1px;background:#3F3F46;"></div>
<div class="a" style="left:1583px;top:182px;width:305px;height:23px;background:#252526;"></div>
<div class="a" style="left:1583px;top:204px;width:305px;height:1px;background:#3F3F46;"></div>
<div class="a" style="left:1664px;top:182px;width:1px;height:22px;background:#3F3F46;"></div>
<div class="a" style="left:1789px;top:182px;width:1px;height:22px;background:#3F3F46;"></div>
<div class="a" style="left:1639px;top:199px;width:1px;height:5px;background:#5A5A5A;"></div>
<div class="a" style="left:1689px;top:199px;width:1px;height:5px;background:#5A5A5A;"></div>
<div class="a" style="left:1714px;top:199px;width:1px;height:5px;background:#5A5A5A;"></div>
<div class="a" style="left:1739px;top:199px;width:1px;height:5px;background:#5A5A5A;"></div>
<div class="a" style="left:1764px;top:199px;width:1px;height:5px;background:#5A5A5A;"></div>
<div class="a" style="left:1814px;top:199px;width:1px;height:5px;background:#5A5A5A;"></div>
<div class="a" style="left:1839px;top:199px;width:1px;height:5px;background:#5A5A5A;"></div>
<div class="t" style="left:1665px;top:182px;color:#F1F1F1;font-size:12px;">40 с</div>
<div class="t" style="left:1792px;top:182px;color:#F1F1F1;font-size:12px;">50 с</div>
<div class="a" style="left:1615px;top:182px;width:5px;height:22px;background:#F1F1F1;"></div>
<div class="a" style="left:1852px;top:182px;width:5px;height:22px;background:#F1F1F1;"></div>
<div class="a" style="left:1583px;top:205px;width:305px;height:240px;background:#252526;"></div>
<svg style="left:1588px;top:211px" width="8" height="8" viewBox="0 0 8 8"><path d="M8 0 V8 H0 Z" fill="#C0C0C0"/></svg>
<div class="t" style="left:1600px;top:208px;color:#F1F1F1;font-size:12px;font-weight:bold;letter-spacing:-0.35px;">События</div>
<div class="a" style="left:1619px;top:225px;width:233px;height:24px;border:1px solid #3F3F46;"></div>
<div class="a" style="left:1620px;top:230px;width:227px;height:14px;background:#727272;"></div>
<div class="a" style="left:1664px;top:226px;width:1px;height:4px;background:#3F3F46;"></div>
<div class="a" style="left:1789px;top:226px;width:1px;height:4px;background:#3F3F46;"></div>
<svg style="left:1600px;top:229px" width="11" height="12" viewBox="0 0 11 12"><rect x="0.75" y="0.75" width="9.5" height="10.5" fill="none" stroke="#F1F1F1" stroke-width="1.5"/><path d="M5.5 0.5 V11.5" stroke="#F1F1F1" stroke-width="1.5"/></svg>
<svg style="left:1588px;top:254px" width="8" height="8" viewBox="0 0 8 8"><path d="M8 0 V8 H0 Z" fill="#C0C0C0"/></svg>
<div class="t" style="left:1600px;top:251px;color:#F1F1F1;font-size:12px;font-weight:bold;letter-spacing:-0.35px;">Память процесса (ГБ)</div>
<svg style="left:1813px;top:252px" width="13" height="11" viewBox="0 0 13 11"><path d="M0 0 H13 L6.5 11 Z" fill="#3D9FE8"/></svg>
<svg style="left:1838px;top:251px" width="13" height="13" viewBox="0 0 13 13"><circle cx="6.5" cy="6.5" r="6" fill="#75B4D0"/></svg>
<div class="a" style="left:1619px;top:268px;width:233px;height:70px;background:#1E1E1E;border:1px solid #555558;"></div>
<div class="a" style="left:1664px;top:269px;width:1px;height:68px;background:#3F3F46;"></div>
<div class="a" style="left:1789px;top:269px;width:1px;height:68px;background:#3F3F46;"></div>
<svg style="left:1619px;top:268px" width="233" height="70" viewBox="0 0 233 70"><polygon points="1.1,27.4 38.7,27.4 44.3,29.3 52.0,28.6 59.8,25.1 93.5,12.4 102.0,10.0 106.2,10.0 107.6,13.8 121.6,14.5 149.1,14.2 151.2,12.4 158.2,11.3 168.1,10.6 177.9,11.0 184.2,11.3 191.3,7.2 196.2,6.5 228.5,6.8 228.5,69.1 1.1,69.1" fill="#5A7D91"/><path d="M45 1 V69 M170 1 V69" stroke="#6A8C9E" stroke-width="1" opacity="0.5"/><polyline points="1.1,27.4 38.7,27.4 44.3,29.3 52.0,28.6 59.8,25.1 93.5,12.4 102.0,10.0 106.2,10.0 107.6,13.8 121.6,14.5 149.1,14.2 151.2,12.4 158.2,11.3 168.1,10.6 177.9,11.0 184.2,11.3 191.3,7.2 196.2,6.5 228.5,6.8" fill="none" stroke="#70B0CC" stroke-width="1" stroke-linejoin="round"/></svg>
<div class="t" style="left:1607px;top:268px;color:#F1F1F1;font-size:12px;">2</div>
<div class="t" style="left:1607px;top:322px;color:#F1F1F1;font-size:12px;">0</div>
<div class="t" style="left:1857px;top:268px;color:#F1F1F1;font-size:12px;">2</div>
<div class="t" style="left:1857px;top:322px;color:#F1F1F1;font-size:12px;">0</div>
<svg style="left:1588px;top:344px" width="8" height="8" viewBox="0 0 8 8"><path d="M8 0 V8 H0 Z" fill="#C0C0C0"/></svg>
<div class="t" style="left:1600px;top:341px;color:#F1F1F1;font-size:12px;font-weight:bold;letter-spacing:-0.35px;">ЦП (% всех процессоров)</div>
<div class="a" style="left:1619px;top:358px;width:233px;height:70px;background:#1E1E1E;border:1px solid #555558;"></div>
<div class="a" style="left:1664px;top:359px;width:1px;height:68px;background:#3F3F46;"></div>
<div class="a" style="left:1789px;top:359px;width:1px;height:68px;background:#3F3F46;"></div>
<svg style="left:1619px;top:358px" width="233" height="70" viewBox="0 0 233 70"><polygon points="1.1,39.8 4.9,34.2 6.0,46.9 9.8,40.5 10.8,24.3 16.2,45.2 19.0,40.1 20.4,43.3 24.6,37.7 30.2,34.2 34.4,46.1 38.9,34.2 45.7,43.3 50.6,30.0 55.5,6.1 58.4,3.5 61.2,6.8 66.1,17.3 70.3,20.8 71.0,12.4 76.6,6.1 79.2,23.6 81.6,20.8 84.4,22.9 86.2,40.5 92.1,37.3 95.2,1.1 99.1,8.9 104.1,12.4 108.3,18.0 110.4,25.8 114.6,58.1 116.0,53.9 118.8,53.9 123.1,57.4 125.9,48.3 128.0,51.8 132.2,45.7 135.0,48.3 147.0,49.0 152.9,40.5 156.1,48.3 158.9,49.0 161.7,51.8 163.8,51.8 168.1,54.6 172.3,51.1 175.8,57.4 182.1,49.0 186.3,51.8 190.6,45.4 196.2,6.1 198.3,32.8 201.1,41.2 204.6,28.6 208.8,37.0 211.7,34.2 213.1,43.3 215.9,43.3 219.4,37.0 222.2,46.1 224.3,41.2 226.0,48.3 228.1,68.7 228.8,34.9 228.8,69.1 1.1,69.1" fill="#5A7D91"/><path d="M45 1 V69 M170 1 V69" stroke="#6A8C9E" stroke-width="1" opacity="0.5"/><polyline points="1.1,39.8 4.9,34.2 6.0,46.9 9.8,40.5 10.8,24.3 16.2,45.2 19.0,40.1 20.4,43.3 24.6,37.7 30.2,34.2 34.4,46.1 38.9,34.2 45.7,43.3 50.6,30.0 55.5,6.1 58.4,3.5 61.2,6.8 66.1,17.3 70.3,20.8 71.0,12.4 76.6,6.1 79.2,23.6 81.6,20.8 84.4,22.9 86.2,40.5 92.1,37.3 95.2,1.1 99.1,8.9 104.1,12.4 108.3,18.0 110.4,25.8 114.6,58.1 116.0,53.9 118.8,53.9 123.1,57.4 125.9,48.3 128.0,51.8 132.2,45.7 135.0,48.3 147.0,49.0 152.9,40.5 156.1,48.3 158.9,49.0 161.7,51.8 163.8,51.8 168.1,54.6 172.3,51.1 175.8,57.4 182.1,49.0 186.3,51.8 190.6,45.4 196.2,6.1 198.3,32.8 201.1,41.2 204.6,28.6 208.8,37.0 211.7,34.2 213.1,43.3 215.9,43.3 219.4,37.0 222.2,46.1 224.3,41.2 226.0,48.3 228.1,68.7 228.8,34.9" fill="none" stroke="#70B0CC" stroke-width="1" stroke-linejoin="round"/></svg>
<div class="t" style="left:1595px;top:358px;color:#F1F1F1;font-size:12px;">100</div>
<div class="t" style="left:1607px;top:412px;color:#F1F1F1;font-size:12px;">0</div>
<div class="t" style="left:1857px;top:358px;color:#F1F1F1;font-size:12px;">100</div>
<div class="t" style="left:1857px;top:412px;color:#F1F1F1;font-size:12px;">0</div>
<div class="a" style="left:1583px;top:445px;width:305px;height:2px;background:#252526;"></div>
<div class="a" style="left:1583px;top:447px;width:305px;height:3px;background:#3F3F46;"></div>
<div class="a" style="left:1583px;top:450px;width:305px;height:362px;background:#252526;"></div>
<div class="a" style="left:1587px;top:454px;width:51px;height:20px;background:#3F3F46;"></div>
<div class="t" style="left:1593px;top:455px;color:#F1F1F1;font-size:12px;">Сводка</div>
<div class="t" style="left:1644px;top:455px;color:#F1F1F1;font-size:12px;">События</div>
<div class="t" style="left:1705px;top:455px;color:#F1F1F1;font-size:12px;">Использование памяти</div>
<div class="t" style="left:1847px;top:455px;color:#F1F1F1;font-size:12px;">Ис</div>
<div class="a" style="left:1863px;top:454px;width:24px;height:20px;background:#252526;"></div>
<svg style="left:1866px;top:459px" width="5" height="8" viewBox="0 0 5 8"><path d="M5 0 L0 4 L5 8 Z" fill="#F1F1F1"/></svg>
<svg style="left:1878px;top:459px" width="5" height="8" viewBox="0 0 5 8"><path d="M0 0 L5 4 L0 8 Z" fill="#F1F1F1"/></svg>
<div class="a" style="left:1583px;top:474px;width:305px;height:3px;background:#3F3F46;"></div>
<div class="t" style="left:1592px;top:481px;color:#F1F1F1;font-size:12px;font-weight:bold;letter-spacing:-0.35px;">События</div>
<div class="a" style="left:1583px;top:500px;width:305px;height:1px;background:#3F3F46;"></div>
<svg style="left:1597px;top:510px" width="14" height="8" viewBox="0 0 14 8"><path d="M1 4 L4 1 L7 4 L4 7 Z M5 4 L8 1 L11 4 L8 7 Z M9 4 L12 1 L14 3" fill="none" stroke="#C8C8C8" stroke-width="1.2"/></svg>
<div class="t" style="left:1619px;top:507px;color:#F1F1F1;font-size:12px;">Отображение событий (1 из 1)</div>
<div class="a" style="left:1583px;top:528px;width:305px;height:1px;background:#3F3F46;"></div>
<div class="t" style="left:1592px;top:533px;color:#F1F1F1;font-size:12px;font-weight:bold;letter-spacing:-0.35px;">Использование памяти</div>
<div class="a" style="left:1583px;top:551px;width:305px;height:1px;background:#3F3F46;"></div>
<svg style="left:1597px;top:561px" width="14" height="11" viewBox="0 0 14 11"><rect x="0.5" y="2" width="13" height="8.5" fill="none" stroke="#6A6A6A"/><circle cx="7" cy="6" r="2.3" fill="none" stroke="#6A6A6A"/><rect x="4" y="0" width="4" height="2" fill="#6A6A6A"/></svg>
<div class="t" style="left:1619px;top:559px;color:#6D6D6D;font-size:12px;">Сделать снимок</div>
<svg style="left:1597px;top:588px" width="14" height="13" viewBox="0 0 14 13"><rect x="1" y="1" width="12" height="11" fill="none" stroke="#C8C8C8" stroke-width="1.2"/><rect x="3" y="4" width="8" height="5" fill="none" stroke="#C8C8C8"/><path d="M0 3 H2 M0 6 H2 M0 9 H2 M12 3 H14 M12 6 H14 M12 9 H14" stroke="#C8C8C8"/></svg>
<div class="a" style="left:1619px;top:587px;width:256px;height:16px;overflow:hidden"><div class="t" style="left:0;top:0;color:#F1F1F1;font-size:12px">Включить профилирование кучи (влияет на производительность)</div></div>
<div class="a" style="left:1583px;top:608px;width:305px;height:1px;background:#3F3F46;"></div>
<div class="t" style="left:1592px;top:613px;color:#F1F1F1;font-size:12px;font-weight:bold;letter-spacing:-0.35px;">Использование ЦП</div>
<div class="a" style="left:1583px;top:631px;width:305px;height:1px;background:#3F3F46;"></div>
<svg style="left:1599px;top:640px" width="12" height="12" viewBox="0 0 12 12"><circle cx="6" cy="6" r="5" fill="#3C3C3C" stroke="#C8C8C8" stroke-width="1.1"/></svg>
<div class="t" style="left:1619px;top:639px;color:#F1F1F1;font-size:12px;">Запись профиля ЦП</div>
<div class="a" style="left:1914px;top:112px;width:6px;height:129px;background:#3F3F46;"></div>
<div class="a" style="left:1914px;top:254px;width:6px;height:74px;background:#3F3F46;"></div>
<div class="t" style="left:1896px;top:112px;color:#F1F1F1;font-size:12px;writing-mode:vertical-rl;height:auto;line-height:14px">Обозреватель решений</div>
<div class="t" style="left:1896px;top:254px;color:#F1F1F1;font-size:12px;writing-mode:vertical-rl;height:auto;line-height:14px">Team Explorer</div>
<div class="a" style="left:0px;top:811px;width:1920px;height:9px;background:#2D2D30;"></div>
<div class="a" style="left:6px;top:811px;width:1883px;height:9px;background:#3E3E42;"></div>
<div class="a" style="left:6px;top:820px;width:935px;height:21px;background:#2D2D30;"></div>
<div class="t" style="left:11px;top:823px;color:#D0D0D0;font-size:12px;">Видимые</div>
<svg style="left:70px;top:828px" width="819" height="5"><defs><pattern id="dp6" width="4" height="4" patternUnits="userSpaceOnUse"><rect x="0" y="0" width="1" height="1" fill="#505055"/><rect x="2" y="2" width="1" height="1" fill="#505055"/></pattern></defs><rect width="819" height="5" fill="url(#dp6)"/></svg>
<svg style="left:893px;top:827px" width="9" height="5" viewBox="0 0 9 5"><path d="M0 0 H9 L4.5 5 Z" fill="#F1F1F1"/></svg>
<svg style="left:910px;top:825px" width="9" height="12" viewBox="0 0 9 12"><path d="M1.5 0.5 H7.5 M2.5 0.5 V7 H6.5 V0.5 M0 7 H9 M4.5 7 V12" fill="none" stroke="#F1F1F1" stroke-width="1.2"/></svg>
<svg style="left:925px;top:826px" width="10" height="9" viewBox="0 0 10 9"><path d="M1 0.5 L9 8.5 M9 0.5 L1 8.5" stroke="#F1F1F1" stroke-width="1.6"/></svg>
<div class="a" style="left:6px;top:841px;width:1px;height:150px;background:#3F3F46;"></div>
<div class="a" style="left:7px;top:841px;width:917px;height:149px;background:#252526;"></div>
<div class="a" style="left:7px;top:860px;width:917px;height:1px;background:#3F3F46;"></div>
<div class="a" style="left:15px;top:841px;width:1px;height:19px;background:#3F3F46;"></div>
<div class="a" style="left:318px;top:841px;width:1px;height:19px;background:#3F3F46;"></div>
<div class="a" style="left:772px;top:841px;width:1px;height:19px;background:#3F3F46;"></div>
<div class="t" style="left:21px;top:843px;color:#F1F1F1;font-size:12px;">Имя</div>
<div class="t" style="left:324px;top:843px;color:#F1F1F1;font-size:12px;">Значение</div>
<div class="t" style="left:777px;top:843px;color:#F1F1F1;font-size:12px;">Тип</div>
<div class="a" style="left:16px;top:878px;width:908px;height:1px;background:#101012;"></div>
<div class="a" style="left:16px;top:895px;width:908px;height:1px;background:#101012;"></div>
<div class="a" style="left:16px;top:912px;width:908px;height:1px;background:#101012;"></div>
<div class="a" style="left:16px;top:929px;width:908px;height:1px;background:#101012;"></div>
<div class="a" style="left:16px;top:946px;width:908px;height:1px;background:#101012;"></div>
<div class="a" style="left:318px;top:861px;width:1px;height:85px;background:#101012;"></div>
<div class="a" style="left:772px;top:861px;width:1px;height:85px;background:#101012;"></div>
<div class="a" style="left:924px;top:841px;width:17px;height:149px;background:#3E3E42;"></div>
<svg style="left:928px;top:847px" width="9" height="5" viewBox="0 0 9 5"><path d="M0 5 L4.5 0 L9 5 Z" fill="#555558"/></svg>
<svg style="left:928px;top:980px" width="9" height="5" viewBox="0 0 9 5"><path d="M0 0 L4.5 5 L9 0 Z" fill="#555558"/></svg>
<svg style="left:22px;top:866px" width="5" height="9" viewBox="0 0 5 9"><path d="M0.5 0.8 L4.3 4.5 L0.5 8.2 Z" fill="none" stroke="#A0A0A0" stroke-width="1"/></svg>
<svg style="left:35px;top:865px" width="11" height="10" viewBox="0 0 11 10"><path d="M0 3 L5.5 0 L11 3 V7 L5.5 10 L0 7 Z" fill="#75BEFF"/><path d="M0 3 L5.5 5.5 L11 3 M5.5 5.5 V10" fill="none" stroke="#2F6FA8" stroke-width="0.7"/></svg>
<div class="t" style="left:54px;top:862px;color:#F1F1F1;font-size:12px;">anim_layers</div>
<div class="a" style="left:322px;top:862px;width:448px;height:16px;overflow:hidden"><div class="t" style="left:0;top:0;color:#F1F1F1;font-size:12px;letter-spacing:-0.25px">0x0117e4d0 {{pad_0000=0x0117e4d0 &quot;MMMMMMMMMMMMMMMMMMMMMM... m...</div></div>
<div class="t" style="left:777px;top:862px;color:#F1F1F1;font-size:12px;">AnimationLayer[13]</div>
<svg style="left:22px;top:883px" width="5" height="9" viewBox="0 0 5 9"><path d="M0.5 0.8 L4.3 4.5 L0.5 8.2 Z" fill="none" stroke="#A0A0A0" stroke-width="1"/></svg>
<svg style="left:35px;top:882px" width="11" height="10" viewBox="0 0 11 10"><path d="M0 3 L5.5 0 L11 3 V7 L5.5 10 L0 7 Z" fill="#75BEFF"/><path d="M0 3 L5.5 5.5 L11 3 M5.5 5.5 V10" fill="none" stroke="#2F6FA8" stroke-width="0.7"/></svg>
<svg style="left:42px;top:886px" width="8" height="8" viewBox="0 0 8 8"><rect x="0.5" y="0.5" width="7" height="7" fill="#252526" stroke="#C8C8C8"/><path d="M2.5 5.5 H5.5 M3 3 L4 2.5 V5.5" stroke="#C8C8C8" stroke-width="0.8"/></svg>
<div class="t" style="left:54px;top:879px;color:#F1F1F1;font-size:12px;">g_ctx</div>
<div class="a" style="left:322px;top:879px;width:448px;height:16px;overflow:hidden"><div class="t" style="left:0;top:0;color:#F1F1F1;font-size:12px;letter-spacing:-0.25px">{m_globals={w2s_matrix=0x52a52c28 {0x52a52c28 {0.750000000, 0.000000000, 0.0000...</div></div>
<div class="t" style="left:777px;top:879px;color:#F1F1F1;font-size:12px;">ctx_t</div>
<svg style="left:22px;top:900px" width="5" height="9" viewBox="0 0 5 9"><path d="M0.5 0.8 L4.3 4.5 L0.5 8.2 Z" fill="none" stroke="#A0A0A0" stroke-width="1"/></svg>
<svg style="left:35px;top:899px" width="11" height="10" viewBox="0 0 11 10"><path d="M0 3 L5.5 0 L11 3 V7 L5.5 10 L0 7 Z" fill="#75BEFF"/><path d="M0 3 L5.5 5.5 L11 3 M5.5 5.5 V10" fill="none" stroke="#2F6FA8" stroke-width="0.7"/></svg>
<div class="t" style="left:54px;top:896px;color:#F1F1F1;font-size:12px;">g_ctx.m_local</div>
<div class="a" style="left:322px;top:896px;width:448px;height:16px;overflow:hidden"><div class="t" style="left:0;top:0;color:#F1F1F1;font-size:12px;letter-spacing:-0.25px">0x2d5f0020 &lt;Информация недоступна, символы для client_panorama.dll не загр...</div></div>
<div class="t" style="left:777px;top:896px;color:#F1F1F1;font-size:12px;">player_t *</div>
<svg style="left:22px;top:917px" width="5" height="9" viewBox="0 0 5 9"><path d="M0.5 0.8 L4.3 4.5 L0.5 8.2 Z" fill="none" stroke="#A0A0A0" stroke-width="1"/></svg>
<svg style="left:35px;top:916px" width="11" height="10" viewBox="0 0 11 10"><path d="M0 3 L5.5 0 L11 3 V7 L5.5 10 L0 7 Z" fill="#75BEFF"/><path d="M0 3 L5.5 5.5 L11 3 M5.5 5.5 V10" fill="none" stroke="#2F6FA8" stroke-width="0.7"/></svg>
<div class="t" style="left:54px;top:913px;color:#F1F1F1;font-size:12px;">pose_parameters</div>
<div class="a" style="left:322px;top:913px;width:448px;height:16px;overflow:hidden"><div class="t" style="left:0;top:0;color:#F1F1F1;font-size:12px;letter-spacing:-0.25px">0x0117e7b0 {1.71479872e-15, 1.71477881e-15, 1.71497024e-15, 1.71496770e-15, 1.714...</div></div>
<div class="t" style="left:777px;top:913px;color:#F1F1F1;font-size:12px;">float[24]</div>
<svg style="left:22px;top:934px" width="5" height="9" viewBox="0 0 5 9"><path d="M0.5 0.8 L4.3 4.5 L0.5 8.2 Z" fill="none" stroke="#A0A0A0" stroke-width="1"/></svg>
<svg style="left:35px;top:933px" width="11" height="10" viewBox="0 0 11 10"><path d="M0 3 L5.5 0 L11 3 V7 L5.5 10 L0 7 Z" fill="#75BEFF"/><path d="M0 3 L5.5 5.5 L11 3 M5.5 5.5 V10" fill="none" stroke="#2F6FA8" stroke-width="0.7"/></svg>
<div class="t" style="left:54px;top:930px;color:#F1F1F1;font-size:12px;">this</div>
<div class="a" style="left:322px;top:930px;width:448px;height:16px;overflow:hidden"><div class="t" style="left:0;top:0;color:#F1F1F1;font-size:12px;letter-spacing:-0.25px">0x52a4d0e8 {csgo_cheat.dll!animation_state inst} {...}</div></div>
<div class="t" style="left:777px;top:930px;color:#F1F1F1;font-size:12px;">animation_state *</div>
<div class="a" style="left:6px;top:990px;width:935px;height:21px;background:#2D2D30;"></div>
<div class="a" style="left:6px;top:990px;width:63px;height:21px;background:#252526;border:1px solid #3F3F46;border-top:none;"></div>
<div class="t" style="left:12px;top:993px;color:#0097FB;font-size:12px;">Видимые</div>
<div class="t" style="left:75px;top:993px;color:#F1F1F1;font-size:12px;">Локальные</div>
<div class="t" style="left:149px;top:993px;color:#F1F1F1;font-size:12px;">Контрольные значения 1</div>
<div class="a" style="left:941px;top:820px;width:7px;height:191px;background:#2D2D30;"></div>
<div class="a" style="left:948px;top:820px;width:941px;height:21px;background:#2D2D30;"></div>
<div class="t" style="left:953px;top:823px;color:#D0D0D0;font-size:12px;">Стек вызовов</div>
<svg style="left:1030px;top:828px" width="804" height="5"><defs><pattern id="dp7" width="4" height="4" patternUnits="userSpaceOnUse"><rect x="0" y="0" width="1" height="1" fill="#505055"/><rect x="2" y="2" width="1" height="1" fill="#505055"/></pattern></defs><rect width="804" height="5" fill="url(#dp7)"/></svg>
<svg style="left:1841px;top:827px" width="9" height="5" viewBox="0 0 9 5"><path d="M0 0 H9 L4.5 5 Z" fill="#F1F1F1"/></svg>
<svg style="left:1858px;top:825px" width="9" height="12" viewBox="0 0 9 12"><path d="M1.5 0.5 H7.5 M2.5 0.5 V7 H6.5 V0.5 M0 7 H9 M4.5 7 V12" fill="none" stroke="#F1F1F1" stroke-width="1.2"/></svg>
<svg style="left:1873px;top:826px" width="10" height="9" viewBox="0 0 10 9"><path d="M1 0.5 L9 8.5 M9 0.5 L1 8.5" stroke="#F1F1F1" stroke-width="1.6"/></svg>
<div class="a" style="left:948px;top:841px;width:1px;height:150px;background:#3F3F46;"></div>
<div class="a" style="left:949px;top:841px;width:923px;height:149px;background:#252526;"></div>
<div class="a" style="left:949px;top:860px;width:923px;height:1px;background:#3F3F46;"></div>
<div class="a" style="left:965px;top:841px;width:1px;height:19px;background:#3F3F46;"></div>
<div class="a" style="left:1842px;top:841px;width:1px;height:19px;background:#3F3F46;"></div>
<div class="t" style="left:971px;top:843px;color:#F1F1F1;font-size:12px;">Имя</div>
<div class="t" style="left:1847px;top:843px;color:#F1F1F1;font-size:12px;width:25px;overflow:hidden;">Язык</div>
<div class="a" style="left:949px;top:878px;width:923px;height:1px;background:#101012;"></div>
<div class="a" style="left:949px;top:895px;width:923px;height:1px;background:#101012;"></div>
<div class="a" style="left:949px;top:912px;width:923px;height:1px;background:#101012;"></div>
<div class="a" style="left:949px;top:929px;width:923px;height:1px;background:#101012;"></div>
<div class="a" style="left:949px;top:946px;width:923px;height:1px;background:#101012;"></div>
<div class="a" style="left:965px;top:861px;width:1px;height:85px;background:#101012;"></div>
<div class="a" style="left:1842px;top:861px;width:1px;height:85px;background:#101012;"></div>
<div class="a" style="left:1872px;top:841px;width:17px;height:149px;background:#3E3E42;"></div>
<svg style="left:1876px;top:847px" width="9" height="5" viewBox="0 0 9 5"><path d="M0 5 L4.5 0 L9 5 Z" fill="#555558"/></svg>
<svg style="left:1876px;top:980px" width="9" height="5" viewBox="0 0 9 5"><path d="M0 0 L4.5 5 L9 0 Z" fill="#555558"/></svg>
<div class="a" style="left:970px;top:862px;width:870px;height:16px;overflow:hidden"><div class="t" style="left:0;top:0;color:#9A9A9A;font-size:12px">vcruntime140d.dll!527d2ef0()</div></div>
<div class="t" style="left:1847px;top:862px;color:#9A9A9A;font-size:12px;">Не...</div>
<div class="a" style="left:970px;top:879px;width:870px;height:16px;overflow:hidden"><div class="t" style="left:0;top:0;color:#9A9A9A;font-size:12px">[Указанные ниже кадры могут быть неверны или отсутствовать, символы для vcruntime140d.dll не загружены]</div></div>
<div class="t" style="left:1847px;top:879px;color:#9A9A9A;font-size:12px;">Не...</div>
<div class="a" style="left:970px;top:896px;width:870px;height:16px;overflow:hidden"><div class="t" style="left:0;top:0;color:#F1F1F1;font-size:12px">csgo_cheat.dll!animation_state::create_move()Строка 39</div></div>
<div class="t" style="left:1847px;top:896px;color:#F1F1F1;font-size:12px;letter-spacing:0.5px;">C++</div>
<div class="a" style="left:970px;top:913px;width:870px;height:16px;overflow:hidden"><div class="t" style="left:0;top:0;color:#F1F1F1;font-size:12px">csgo_cheat.dll!hooks::hooked_createmove(float smt, CUserCmd * m_pcmd)Строка 62</div></div>
<div class="t" style="left:1847px;top:913px;color:#F1F1F1;font-size:12px;letter-spacing:0.5px;">C++</div>
<div class="a" style="left:970px;top:930px;width:870px;height:16px;overflow:hidden"><div class="t" style="left:0;top:0;color:#9A9A9A;font-size:12px">[Внешний код]</div></div>
<svg style="left:951px;top:864px" width="13" height="12" viewBox="0 0 13 12"><path d="M1 3.5 H6 V0.8 L11.8 6 L6 11.2 V8.5 H1 Z" fill="#FFCC00" stroke="#E0E0E0" stroke-width="0.8"/></svg>
<svg style="left:950px;top:897px" width="15" height="13" viewBox="0 0 15 13"><path d="M1.5 1 Q2 6 5 6.5 H8 V3 L13.5 7.5 L8 12 V9 H5 Q1 9 0.8 4 Z" fill="#1F5F1F" stroke="#C8C8C8" stroke-width="0.8"/></svg>
<div class="a" style="left:948px;top:990px;width:941px;height:21px;background:#2D2D30;"></div>
<div class="a" style="left:948px;top:990px;width:86px;height:21px;background:#252526;border:1px solid #3F3F46;border-top:none;"></div>
<div class="t" style="left:954px;top:993px;color:#0097FB;font-size:12px;">Стек вызовов</div>
<div class="t" style="left:1040px;top:993px;color:#F1F1F1;font-size:12px;">Точки останова</div>
<div class="t" style="left:1139px;top:993px;color:#F1F1F1;font-size:12px;">Параметры исключений</div>
<div class="t" style="left:1288px;top:993px;color:#F1F1F1;font-size:12px;">Командное окно</div>
<div class="t" style="left:1392px;top:993px;color:#F1F1F1;font-size:12px;">Окно интерпретации</div>
<div class="t" style="left:1520px;top:993px;color:#F1F1F1;font-size:12px;">Вывод</div>
<div class="a" style="left:0px;top:1017px;width:1920px;height:23px;background:#CA5100;"></div>
<svg style="left:4px;top:1024px" width="17" height="12" viewBox="0 0 17 12"><path d="M3.5 0.75 H16 L13.5 11.25 H1 Z" fill="none" stroke="#FFFFFF" stroke-width="1.3"/></svg>
<div class="t" style="left:29px;top:1021px;color:#FFFFFF;font-size:12px;">Готово</div>
<div class="t" style="left:1160px;top:1021px;color:#FFFFFF;font-size:12px;">Строка 39</div>
<div class="t" style="left:1252px;top:1021px;color:#FFFFFF;font-size:12px;">Столбец 1</div>
<div class="t" style="left:1344px;top:1021px;color:#FFFFFF;font-size:12px;">Знак 1</div>
<div class="t" style="left:1480px;top:1021px;color:#FFFFFF;font-size:12px;">ВСТ</div>
<svg style="left:1636px;top:1022px" width="10" height="13" viewBox="0 0 10 13"><path d="M5 13 V2 M1 5.5 L5 1.5 L9 5.5" fill="none" stroke="#FFFFFF" stroke-width="1.8"/></svg>
<div class="t" style="left:1657px;top:1021px;color:#FFFFFF;font-size:12px;">Добавить в систему управления версиями</div>
<svg style="left:1897px;top:1025px" width="9" height="5" viewBox="0 0 9 5"><path d="M0 5 L4.5 0 L9 5 Z" fill="#FFFFFF"/></svg>
<div class="a" style="left:0px;top:1040px;width:1920px;height:40px;background:#0B0C12;"></div>
<svg style="left:16px;top:1052px" width="17" height="17" viewBox="0 0 17 17"><path d="M0 2.3 L7 1.3 V7.8 H0 Z M8 1.1 L17 0 V7.8 H8 Z M0 8.8 H7 V15.3 L0 14.3 Z M8 8.8 H17 V16.6 L8 15.5 Z" fill="#FFFFFF"/></svg>
<svg style="left:64px;top:1052px" width="17" height="17" viewBox="0 0 17 17"><circle cx="10.5" cy="6.5" r="5.5" fill="none" stroke="#FFFFFF" stroke-width="1.3"/><path d="M6.5 10.5 L0.8 16.2" stroke="#FFFFFF" stroke-width="1.3"/></svg>
<svg style="left:112px;top:1052px" width="16" height="16" viewBox="0 0 16 16"><path d="M0.5 0.5 H10 M0.5 15.5 H10 M1.5 3.5 V12.5 H9.5 V3.5 Z M13.5 0 V3 M13.5 12 V16" fill="none" stroke="#FFFFFF" stroke-width="1.1"/><rect x="12.5" y="5" width="2.5" height="6" fill="#FFFFFF"/></svg>
<svg style="left:161px;top:1049px" width="21" height="22" viewBox="0 0 21 22"><path d="M1 9 Q3 1 11 1 Q20 1 20 11 V13 H7 Q7.5 18 13 18 Q16.5 18 19 16.5 V20.5 Q16 22 12 22 Q3 22 3.5 13 Q4 7.5 9 6 Q5 7.5 5.5 10 H15 Q15 5 10.5 5 Q5 5 1 9 Z" fill="#1E88E5"/></svg>
<svg style="left:209px;top:1051px" width="23" height="19" viewBox="0 0 23 19"><path d="M0 1 H8 L10 3 H23 V19 H0 Z" fill="#F4D776"/><path d="M0 4 H23 V19 H0 Z" fill="#FBE7A1"/><path d="M5 19 V12 H18 V19 H15 V15 H8 V19 Z" fill="#3DA7E6"/></svg>
<div class="a" style="left:200px;top:1078px;width:40px;height:2px;background:#76B9ED;"></div>
<svg style="left:257px;top:1048px" width="24" height="24" viewBox="0 0 24 24"><path d="M8 7 V4 Q8 1 12 1 Q16 1 16 4 V7" fill="none" stroke="#FFFFFF" stroke-width="1.3"/><path d="M0.5 7 H23.5 V22 Q23.5 23.5 22 23.5 H2 Q0.5 23.5 0.5 22 Z" fill="#FFFFFF"/><rect x="6" y="10" width="5.5" height="5.5" fill="#F25022"/><rect x="12.5" y="10" width="5.5" height="5.5" fill="#7FBA00"/><rect x="6" y="16.5" width="5.5" height="5.5" fill="#00A4EF"/><rect x="12.5" y="16.5" width="5.5" height="5.5" fill="#FFB900"/></svg>
<svg style="left:306px;top:1050px" width="24" height="20" viewBox="0 0 24 20"><path d="M0 6 L12 0 L24 6 V19.5 H0 Z" fill="#FFFFFF"/><path d="M0 6 L12 13 L24 6" fill="none" stroke="#0B0C12" stroke-width="1.3"/><path d="M12 13 L17 18 L14 12 Z" fill="#0B0C12"/></svg>
<svg style="left:356px;top:1049px" width="23" height="23" viewBox="0 0 24 24"><circle cx="12" cy="12" r="11.5" fill="#DB4437"/><path d="M12 12 L2.1 6.3 A11.5 11.5 0 0 0 12 23.5 L17.8 12 Z" fill="#0F9D58"/><path d="M12 12 L12 23.5 A11.5 11.5 0 0 0 22.4 7 H12 Z" fill="#FFCD40"/><path d="M12 6.5 H22.4" stroke="#DB4437" stroke-width="0"/><circle cx="12" cy="12" r="5.3" fill="#FFFFFF"/><circle cx="12" cy="12" r="4.2" fill="#4285F4"/></svg>
<div class="a" style="left:347px;top:1078px;width:40px;height:2px;background:#76B9ED;"></div>
<div class="a" style="left:392px;top:1040px;width:48px;height:40px;background:#3A3A40;"></div>
<svg style="left:404px;top:1048px" width="24" height="24" viewBox="0 0 24 24"><path d="M17 0.5 L23.5 3.3 V20.7 L17 23.5 L1 18 L2.5 16.8 L17 19.5 Z" fill="#865FC5"/><path d="M17 0.5 V19.5 L23.5 20.7 V3.3 Z" fill="#865FC5"/><path d="M1 6.5 L3 5.5 L8.5 10 L17 3.5 V16.5 L8.5 12 L3 16.5 L1 15.5 Z M3 8.5 V13.5 L5.8 11 Z M17 7 L11.5 11 L17 14 Z" fill="#865FC5" fill-rule="evenodd"/></svg>
<div class="a" style="left:392px;top:1078px;width:48px;height:2px;background:#76B9ED;"></div>
<svg style="left:455px;top:1050px" width="21" height="21" viewBox="0 0 21 21"><path d="M2.5 0 H18.5 Q20.5 0 20.5 2.5 V21 L16.5 17.5 H2.5 Q0.5 17.5 0.5 15 V2.5 Q0.5 0 2.5 0 Z" fill="#7289DA"/><path d="M5 12.5 Q4.5 8 7 5.5 Q8.5 5 9.5 5.5 H11.5 Q12.5 5 14 5.5 Q16.5 8 16 12.5 Q14.5 13.8 13 13.8 L12.3 12.8 Q10.5 13.3 8.7 12.8 L8 13.8 Q6.5 13.8 5 12.5 Z" fill="#FFFFFF"/><circle cx="8.3" cy="10" r="1.2" fill="#7289DA"/><circle cx="12.7" cy="10" r="1.2" fill="#7289DA"/></svg>
<div class="a" style="left:445px;top:1078px;width:40px;height:2px;background:#76B9ED;"></div>
<svg style="left:502px;top:1048px" width="24" height="24" viewBox="0 0 24 24"><defs><radialGradient id="cg" cx="50%" cy="35%" r="70%"><stop offset="0" stop-color="#F5A623"/><stop offset="0.6" stop-color="#C8740F"/><stop offset="1" stop-color="#6B3A08"/></radialGradient></defs><rect x="0" y="0" width="24" height="24" rx="2" fill="url(#cg)"/><path d="M10 3 Q12 2.5 12.5 4.5 L12 6 L19 6.5 L19 7.5 L14 8 L13 11 L14 15 L15 21 L13 21 L11.5 15.5 L9.5 21 L7.5 21 L9 14 L9 9 L7.5 8 Z" fill="#1A1208"/></svg>
<div class="a" style="left:494px;top:1078px;width:40px;height:2px;background:#76B9ED;"></div>
<svg style="left:1662px;top:1052px" width="15" height="16" viewBox="0 0 15 16"><circle cx="10.5" cy="3" r="2.5" fill="none" stroke="#FFFFFF" stroke-width="1"/><path d="M7 9 Q7.5 6 10.5 6 Q14 6 14.5 9.5" fill="none" stroke="#FFFFFF" stroke-width="1"/><circle cx="4.5" cy="8" r="2.5" fill="none" stroke="#FFFFFF" stroke-width="1"/><path d="M0.5 15.5 Q1 11 4.5 11 Q8 11 8.5 15.5" fill="none" stroke="#FFFFFF" stroke-width="1"/></svg>
<svg style="left:1699px;top:1056px" width="13" height="8" viewBox="0 0 13 8"><path d="M0.5 7.5 L6.5 1 L12.5 7.5" fill="none" stroke="#FFFFFF" stroke-width="1.2"/></svg>
<svg style="left:1721px;top:1054px" width="17" height="14" viewBox="0 0 17 14"><rect x="3.5" y="0.5" width="13" height="9" fill="none" stroke="#FFFFFF" stroke-width="1"/><path d="M10 9.5 V12.5 M6 12.5 H14 M0.5 3 H4" stroke="#FFFFFF" stroke-width="1"/><rect x="0.5" y="0.5" width="4" height="3.5" fill="#0B0C12" stroke="#FFFFFF" stroke-width="1"/></svg>
<svg style="left:1745px;top:1054px" width="17" height="13" viewBox="0 0 17 13"><path d="M0.5 4 H3 L7 0.5 V12.5 L3 9 H0.5 Z" fill="none" stroke="#FFFFFF" stroke-width="1"/><path d="M9 4 Q10.5 6.5 9 9 M11.5 2.5 Q14 6.5 11.5 10.5 M14 1 Q17.5 6.5 14 12" fill="none" stroke="#FFFFFF" stroke-width="1"/></svg>
<div class="t" style="left:1772px;top:1051px;color:#FFFFFF;font-size:12px;">ENG</div>
<div class="t" style="left:1821px;top:1043px;color:#FFFFFF;font-size:12px;">17:19</div>
<div class="t" style="left:1808px;top:1060px;color:#FFFFFF;font-size:12px;">12.12.2018</div>
<svg style="left:1879px;top:1052px" width="25" height="25" viewBox="0 0 25 25"><path d="M0 0 H16 V10 H7 L4 13 V10 H0 Z" fill="#FFFFFF"/><path d="M3 3 H13 M3 5.5 H13 M3 8 H10" stroke="#0B0C12" stroke-width="1"/><circle cx="15" cy="15" r="7.5" fill="#2B2B2B" stroke="#555555" stroke-width="1"/></svg>
<div class="t" style="left:1890px;top:1060px;color:#FFFFFF;font-size:11px;font-weight:bold;">3</div>
<div class="a" style="left:1915px;top:1040px;width:1px;height:40px;background:#3A3A3A;"></div></body></html>
